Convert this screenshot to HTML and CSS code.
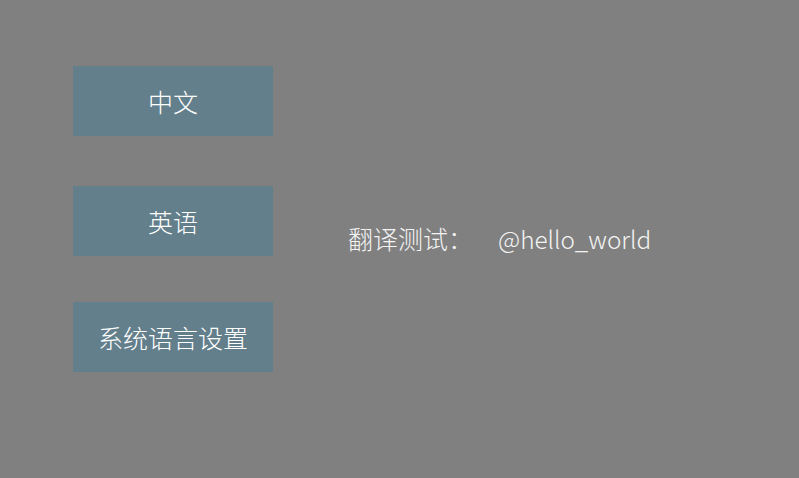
FILE: index.html
```html
<!DOCTYPE html>
<html lang="zh-CN">
<head>
<meta charset="utf-8">
<title>翻译测试</title>
<link rel="stylesheet" href="styles.css">
</head>
<body>
<div class="page">
  <div class="buttons">
    <div class="btn btn-first">中文</div>
    <div class="btn btn-second">英语</div>
    <div class="btn btn-third">系统语言设置</div>
  </div>
  <div class="result">
    <span class="label">翻译测试：</span><span class="value">@hello_world</span>
  </div>
</div>
</body>
</html>
```
FILE: styles.css
```css
html, body {
  margin: 0;
  padding: 0;
  background: #808080;
}
.page {
  width: 799px;
  height: 478px;
  display: flex;
  font-family: "Noto Sans CJK SC", "Noto Sans", sans-serif;
  color: #ffffff;
}
.buttons {
  display: flex;
  flex-direction: column;
  padding: 66px 0 0 73px;
}
.btn {
  width: 200px;
  height: 70px;
  background: #647f8c;
  display: flex;
  align-items: center;
  justify-content: center;
  font-size: 25px;
  font-weight: 300;
}
.btn-second { margin-top: 50px; }
.btn-third { margin-top: 46px; }
.result {
  display: flex;
  align-items: center;
  padding-left: 75px;
  padding-bottom: 2px;
  font-size: 25px;
  font-weight: 300;
  color: #f4f4f4;
}
.label { margin-right: 25px; }
.value { font-size: 24.3px; }
```
